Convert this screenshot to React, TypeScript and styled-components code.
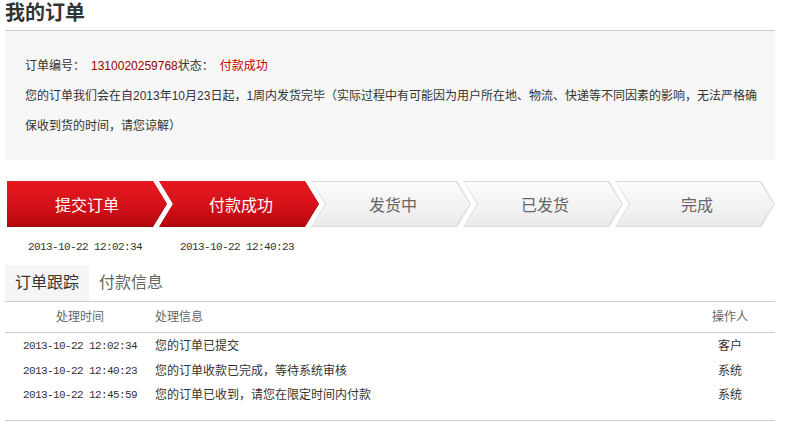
import styled, { createGlobalStyle } from 'styled-components';

const GlobalStyle = createGlobalStyle`
  body {
    margin: 0;
    background: #ffffff;
    font-family: 'Liberation Sans', 'Noto Sans CJK SC', sans-serif;
    color: #333333;
  }
`;

interface StepItem {
  name: string;
  time: string;
  done: boolean;
}

interface LogItem {
  time: string;
  info: string;
  operator: string;
}

const steps: Array<StepItem> = [
  { name: '提交订单', time: '2013-10-22 12:02:34', done: true },
  { name: '付款成功', time: '2013-10-22 12:40:23', done: true },
  { name: '发货中', time: '', done: false },
  { name: '已发货', time: '', done: false },
  { name: '完成', time: '', done: false },
];

const logs: Array<LogItem> = [
  { time: '2013-10-22 12:02:34', info: '您的订单已提交', operator: '客户' },
  { time: '2013-10-22 12:40:23', info: '您的订单收款已完成，等待系统审核', operator: '系统' },
  { time: '2013-10-22 12:45:59', info: '您的订单已收到，请您在限定时间内付款', operator: '系统' },
];

const Page = styled.div`
  width: 770px;
  padding-left: 5px;
`;

const Title = styled.h2`
  margin: 0;
  height: 30px;
  line-height: 26px;
  font-size: 20px;
  font-weight: bold;
  color: #333333;
  border-bottom: 1px solid #cccccc;
`;

const InfoBox = styled.div`
  background: #f7f7f7;
  padding: 20px 14px 19px 20px;
  font-size: 12px;
  line-height: 30px;
  color: #333333;
`;

const Red = styled.span<{ $dark?: boolean }>`
  color: ${(p) => (p.$dark ? '#990000' : '#c00000')};
  margin-left: 6px;
`;

const StepRow = styled.div`
  display: flex;
  margin-top: 21px;
  padding-left: 2px;
`;

const StepCol = styled.div`
  width: 160px;
  margin-right: -8px;
  display: flex;
  flex-direction: column;
  align-items: center;
`;

const shape = (first: boolean) =>
  first
    ? 'polygon(0 0, calc(100% - 14px) 0, 100% 50%, calc(100% - 14px) 100%, 0 100%)'
    : 'polygon(0 0, calc(100% - 14px) 0, 100% 50%, calc(100% - 14px) 100%, 0 100%, 14px 50%)';

const Step = styled.div<{ $done: boolean; $first: boolean }>`
  position: relative;
  width: 160px;
  height: 46px;
  display: flex;
  align-items: center;
  justify-content: center;
  font-size: 16px;
  color: ${(p) => (p.$done ? '#ffffff' : '#666666')};
  background: ${(p) => (p.$done ? '#a8080c' : '#d8d8d8')};
  clip-path: ${(p) => shape(p.$first)};

  &::before {
    content: '';
    position: absolute;
    inset: ${(p) => (p.$done ? '0 0 2px 0' : '1px')};
    background: ${(p) =>
      p.$done
        ? 'linear-gradient(to bottom, #e71a1f 0%, #d5111a 55%, #b8080d 100%)'
        : 'linear-gradient(to bottom, #fbfbfb 0%, #f2f2f2 60%, #e9e9e9 100%)'};
    clip-path: ${(p) => shape(p.$first)};
  }

  span {
    position: relative;
    padding-left: ${(p) => (p.$first ? '0' : '4px')};
  }
`;

const StepTime = styled.div`
  height: 18px;
  margin-top: 11px;
  line-height: 18px;
  font-family: 'Liberation Mono', monospace;
  font-size: 11px;
  letter-spacing: -0.6px;
  color: #333333;
  padding-right: 4px;
`;

const Tabs = styled.div`
  display: flex;
  margin-top: 9px;
  border-bottom: 1px solid #cccccc;
`;

const Tab = styled.div<{ $active?: boolean }>`
  height: 36px;
  line-height: 36px;
  padding: 0 10px;
  font-size: 16px;
  color: ${(p) => (p.$active ? '#333333' : '#666666')};
  background: ${(p) => (p.$active ? '#f5f5f5' : 'transparent')};
`;

const Table = styled.div`
  border-bottom: 1px solid #cccccc;
  padding-bottom: 12px;
`;

const Row = styled.div<{ $head?: boolean }>`
  display: grid;
  grid-template-columns: 150px 1fr 92px;
  height: ${(p) => (p.$head ? '30px' : '24.5px')};
  line-height: ${(p) => (p.$head ? '30px' : '24.5px')};
  font-size: 12px;
  color: ${(p) => (p.$head ? '#666666' : '#333333')};
  border-bottom: ${(p) => (p.$head ? '1px solid #cccccc' : 'none')};
  margin-bottom: ${(p) => (p.$head ? '1px' : '0')};
`;

const TimeCell = styled.div<{ $mono?: boolean }>`
  text-align: center;
  font-family: ${(p) => (p.$mono ? "'Liberation Mono', monospace" : 'inherit')};
  font-size: ${(p) => (p.$mono ? '11px' : '12px')};
  letter-spacing: ${(p) => (p.$mono ? '-0.6px' : '0')};
`;

const InfoCell = styled.div`
  text-align: left;
`;

const OpCell = styled.div`
  text-align: center;
  padding-left: 2px;
`;

export default function App() {
  return (
    <Page>
      <GlobalStyle />
      <Title>我的订单</Title>
      <InfoBox>
        <div>
          订单编号：<Red $dark>1310020259768</Red>状态：<Red>付款成功</Red>
        </div>
        <div>
          您的订单我们会在自2013年10月23日起，1周内发货完毕（实际过程中有可能因为用户所在地、物流、快递等不同因素的影响，无法严格确保收到货的时间，请您谅解）
        </div>
      </InfoBox>
      <StepRow>
        {steps.map((item, index) => (
          <StepCol key={`step-${index}`}>
            <Step $done={item.done} $first={index === 0}>
              <span>{item.name}</span>
            </Step>
            <StepTime>{item.time}</StepTime>
          </StepCol>
        ))}
      </StepRow>
      <Tabs>
        <Tab $active>订单跟踪</Tab>
        <Tab>付款信息</Tab>
      </Tabs>
      <Table>
        <Row $head>
          <TimeCell>处理时间</TimeCell>
          <InfoCell>处理信息</InfoCell>
          <OpCell>操作人</OpCell>
        </Row>
        {logs.map((item, index) => (
          <Row key={`log-${index}`}>
            <TimeCell $mono>{item.time}</TimeCell>
            <InfoCell>{item.info}</InfoCell>
            <OpCell>{item.operator}</OpCell>
          </Row>
        ))}
      </Table>
    </Page>
  );
}
